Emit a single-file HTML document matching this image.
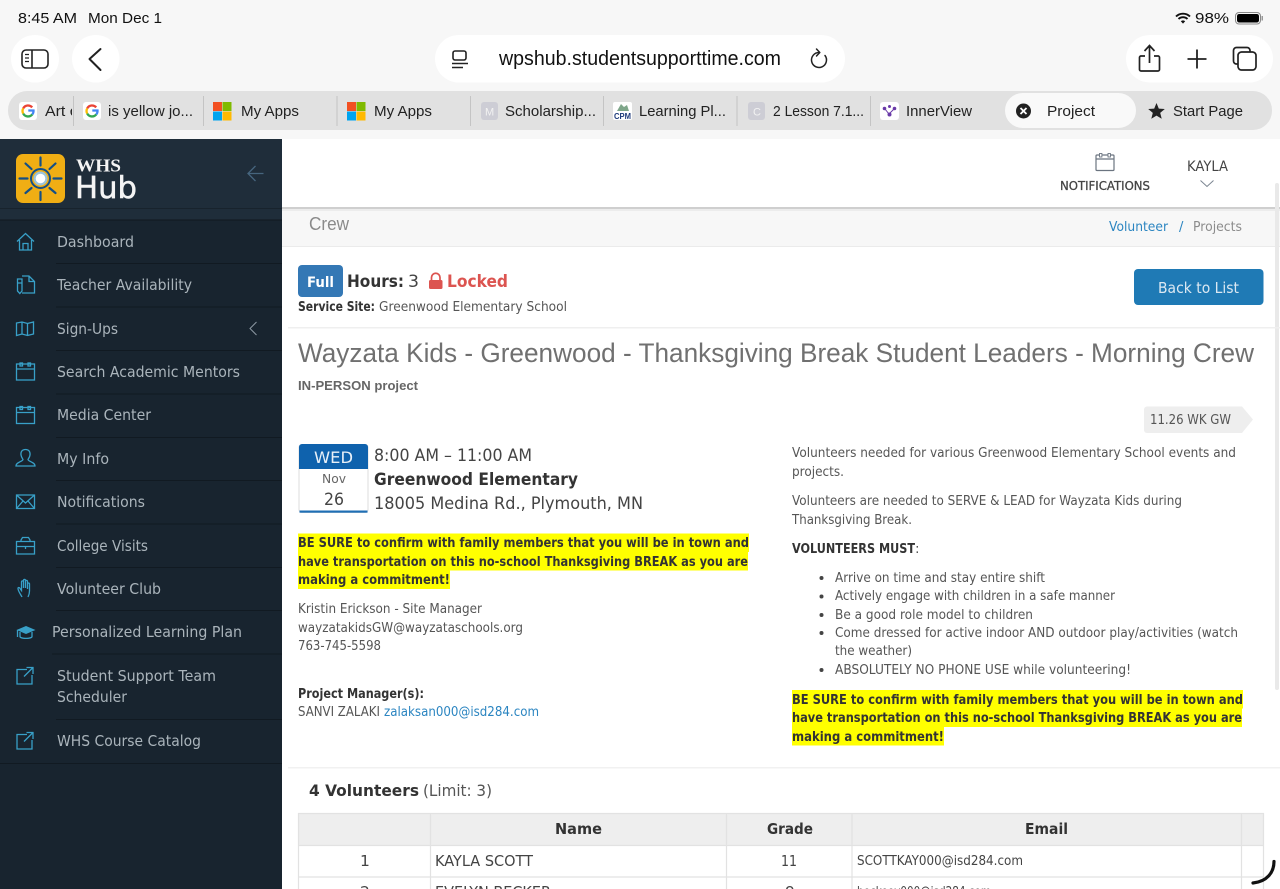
<!DOCTYPE html>
<html><head><meta charset="utf-8"><title>Project</title>
<style>
html,body{margin:0;padding:0;width:1280px;height:889px;overflow:hidden;background:#fff}
svg{display:block;filter:blur(.3px)}
text{white-space:pre}
.l{font-family:"Liberation Sans",sans-serif}
.d{font-family:"DejaVu Sans",sans-serif}
.t{font-family:"Liberation Sans",sans-serif;font-size:14.5px;fill:#222}
.n{font-family:"DejaVu Sans",sans-serif;font-size:15.5px;fill:#aab4bb}
.b{font-family:"DejaVu Sans",sans-serif;font-size:13.5px;fill:#555}
.bb{font-family:"DejaVu Sans",sans-serif;font-size:13.5px;font-weight:bold;fill:#333}
.i{fill:none;stroke:#38a0c8;stroke-width:1.3}
.sep{stroke:#111a22;stroke-width:1}
.g{stroke:#e2e2e2;stroke-width:1.2}
</style></head><body>
<svg width="1280" height="889" viewBox="0 0 1280 889" xmlns="http://www.w3.org/2000/svg">
<defs>
<clipPath id="c1"><rect x="0" y="95" width="72" height="30"/></clipPath>
<g id="goog"><rect x="-9" y="-9" width="18" height="18" rx="3" fill="#fff"/>
<g fill="none" stroke-width="2.3"><path d="M4.200-3.600A5.500 5.500 0 0 0-4.800-2.600" stroke="#ea4335"/><path d="M-4.800-2.600A5.500 5.500 0 0 0-4.800 2.600" stroke="#fbbc05"/><path d="M-4.800 2.600A5.500 5.500 0 0 0 4.300 3.400" stroke="#34a853"/><path d="M4.300 3.400A5.500 5.500 0 0 0 5.500-.5H.3" stroke="#4285f4"/></g></g>
</defs>

<!-- browser chrome -->
<rect width="1280" height="139" fill="#f7f7f7"/>
<text class="l" x="18" y="23" font-size="15" fill="#111" textLength="59" lengthAdjust="spacingAndGlyphs">8:45 AM</text>
<text class="l" x="88" y="23" font-size="15" fill="#111" textLength="74" lengthAdjust="spacingAndGlyphs">Mon Dec 1</text>
<path d="M1176 16.500a10 10 0 0 1 14 0M1178.500 19a6.500 6.500 0 0 1 9 0" fill="none" stroke="#111" stroke-width="1.900"/><path d="M1180.800 21.300a3.200 3.200 0 0 1 4.400 0L1183 23.600z" fill="#111"/>
<text class="l" x="1195" y="23" font-size="15" fill="#111" textLength="34" lengthAdjust="spacingAndGlyphs">98%</text>
<rect x="1235.500" y="12.500" width="25" height="11.500" rx="3.500" fill="none" stroke="#888"/><rect x="1237" y="14" width="22" height="8.500" rx="2.200" fill="#000"/><rect x="1261.500" y="16" width="1.500" height="4.500" fill="#999"/>

<rect x="11" y="35" width="48" height="47.500" rx="24" fill="#fff"/>
<rect x="72" y="35" width="47.500" height="47.500" rx="24" fill="#fff"/>
<rect x="435" y="35" width="410" height="47.500" rx="24" fill="#fff"/>
<rect x="1126" y="35" width="147" height="47.500" rx="24" fill="#fff"/>

<rect x="22" y="50" width="26" height="18" rx="4" fill="none" stroke="#222" stroke-width="1.600"/><path d="M32 50v18" stroke="#222" stroke-width="1.600"/><path d="M25 54.500h4M25 58h4M25 61.500h4" stroke="#222" stroke-width="1.200"/>
<path d="M100.500 50 89.500 60 100.500 71" transform="translate(0 -1)" fill="none" stroke="#222" stroke-width="2" stroke-linecap="round" stroke-linejoin="round"/>
<rect x="453" y="51" width="13" height="9" rx="2" fill="none" stroke="#222" stroke-width="1.600"/><path d="M452 63.500h16M452 67.500h11" stroke="#222" stroke-width="1.600"/>
<text class="l" x="499" y="65" font-size="20" fill="#111" textLength="282" lengthAdjust="spacingAndGlyphs">wpshub.studentsupporttime.com</text>
<path d="M825 55.500a7.500 7.500 0 1 1-6-3" fill="none" stroke="#222" stroke-width="1.500" stroke-linecap="round"/><path d="M816.500 49l3.300 3.500-3.300 3.500" fill="none" stroke="#222" stroke-width="1.500" stroke-linecap="round" stroke-linejoin="round"/>
<path d="M1145 56h-4a1.500 1.500 0 0 0-1.500 1.500v12a1.500 1.500 0 0 0 1.500 1.500h17a1.500 1.500 0 0 0 1.500-1.500v-12a1.500 1.500 0 0 0-1.500-1.500h-4M1149.500 63V46M1144.500 51l5-5.500 5 5.500" fill="none" stroke="#222" stroke-width="1.700"/>
<path d="M1197 49.500v19M1187.500 59h19" stroke="#222" stroke-width="1.800"/>
<rect x="1238" y="52" width="18" height="18" rx="3.500" fill="none" stroke="#222" stroke-width="1.700"/><path d="M1238 64h-1.500a3 3 0 0 1-3-3v-10.500a3 3 0 0 1 3-3H1247a3 3 0 0 1 3 3V52" fill="none" stroke="#222" stroke-width="1.700"/>

<!-- tab bar -->
<rect x="8" y="91" width="1264" height="39" rx="19" fill="#e1e1e1"/>
<rect x="1005" y="93" width="131" height="35" rx="17.500" fill="#f9f9f9"/>
<g stroke="#c4c4c4"><path d="M73.500 96v30M203.500 96v30M337 96v30M470.500 96v30M603.500 96v30M737 96v30M870.500 96v30"/></g>

<use href="#goog" transform="translate(28 111)"/>
<use href="#goog" transform="translate(92 111)"/>
<g clip-path="url(#c1)"><text class="t" x="45" y="116" textLength="38" lengthAdjust="spacingAndGlyphs">Art of</text></g>
<text class="t" x="108" y="116" textLength="85" lengthAdjust="spacingAndGlyphs">is yellow jo...</text>

<rect x="213" y="102" width="9" height="9" fill="#f25022"/><rect x="222.500" y="102" width="9" height="9" fill="#7fba00"/><rect x="213" y="111.500" width="9" height="9" fill="#00a4ef"/><rect x="222.500" y="111.500" width="9" height="9" fill="#ffb900"/>
<text class="t" x="241" y="116" textLength="58" lengthAdjust="spacingAndGlyphs">My Apps</text>
<rect x="347" y="102" width="9" height="9" fill="#f25022"/><rect x="356.500" y="102" width="9" height="9" fill="#7fba00"/><rect x="347" y="111.500" width="9" height="9" fill="#00a4ef"/><rect x="356.500" y="111.500" width="9" height="9" fill="#ffb900"/>
<text class="t" x="374" y="116" textLength="58" lengthAdjust="spacingAndGlyphs">My Apps</text>
<rect x="481" y="102" width="17" height="18" rx="3" fill="#cdcdd5"/><text class="l" x="485" y="115.500" font-size="11" fill="#f2f2f2">M</text>
<text class="t" x="505" y="116" textLength="91" lengthAdjust="spacingAndGlyphs">Scholarship...</text>
<rect x="613" y="102" width="19" height="18" rx="2" fill="#fff"/><path d="M617 111l4-7 3 3 3-2 2 6z" fill="#7fa68a"/><text class="l" x="614" y="119" font-size="8" font-weight="bold" fill="#1d3a7a" textLength="17" lengthAdjust="spacingAndGlyphs">CPM</text>
<text class="t" x="639" y="116" textLength="87" lengthAdjust="spacingAndGlyphs">Learning Pl...</text>
<rect x="748" y="102" width="17" height="18" rx="3" fill="#cdcdd5"/><text class="l" x="753" y="115.500" font-size="11" fill="#f2f2f2">C</text>
<text class="t" x="773" y="116" textLength="91" lengthAdjust="spacingAndGlyphs">2 Lesson 7.1...</text>
<rect x="880" y="102" width="19" height="18" rx="3" fill="#fff"/><g fill="#6a3aa8"><circle cx="884.500" cy="108.500" r="1.800"/><circle cx="894.500" cy="108.500" r="1.800"/><circle cx="889.500" cy="106.500" r="1.500"/><circle cx="889.500" cy="114.500" r="2"/></g><path d="M885 109l4 5 5-5" fill="none" stroke="#6a3aa8"/>
<text class="t" x="906" y="116" textLength="66" lengthAdjust="spacingAndGlyphs">InnerView</text>
<circle cx="1023.500" cy="111" r="7.500" fill="#222"/><path d="M1020.500 108l6 6M1026.500 108l-6 6" stroke="#fff" stroke-width="1.800"/>
<text class="t" x="1047" y="116" textLength="48" lengthAdjust="spacingAndGlyphs">Project</text>
<path d="M1156.500 103l2.300 5.600 6 .4-4.600 3.900 1.500 5.900-5.200-3.200-5.200 3.200 1.500-5.900-4.600-3.900 6-.4z" fill="#222"/>
<text class="t" x="1173" y="116" textLength="70" lengthAdjust="spacingAndGlyphs">Start Page</text>

<!-- main top bar -->
<rect x="282" y="139" width="998" height="69" fill="#fff"/>
<rect x="282" y="208" width="998" height="38" fill="#f7f7f7"/>
<rect x="282" y="207" width="998" height="2" fill="#cfcfcf"/>
<rect x="282" y="209" width="998" height="2" fill="#ececec"/>
<rect x="282" y="246" width="998" height="1" fill="#ebebeb"/>
<rect x="1096" y="155" width="18" height="15.500" rx="1" fill="none" stroke="#6b7480" stroke-width="1.200"/><path d="M1096 159h18" stroke="#6b7480" stroke-width="1.200"/><rect x="1099.500" y="153.500" width="2.400" height="3.500" fill="#fff" stroke="#6b7480" stroke-width=".9"/><rect x="1108" y="153.500" width="2.400" height="3.500" fill="#fff" stroke="#6b7480" stroke-width=".9"/>
<text class="d" x="1060" y="190" font-size="12.500" fill="#444" textLength="90" lengthAdjust="spacingAndGlyphs" stroke="#444" stroke-width=".3">NOTIFICATIONS</text>
<text class="d" x="1187" y="171" font-size="14.500" fill="#444" textLength="41" lengthAdjust="spacingAndGlyphs">KAYLA</text>
<path d="M1200.500 180.500l6.500 6 6.500-6" fill="none" stroke="#7a8490" stroke-width="1"/>
<text class="l" x="309" y="230" font-size="18" fill="#8a8a8a" textLength="40" lengthAdjust="spacingAndGlyphs">Crew</text>
<text class="d" x="1109" y="231" font-size="13.500" fill="#2b85c1" textLength="59" lengthAdjust="spacingAndGlyphs">Volunteer</text>
<text class="d" x="1179" y="231" font-size="13" fill="#2b85c1">/</text>
<text class="d" x="1193" y="231" font-size="13.500" fill="#8c8c8c" textLength="49" lengthAdjust="spacingAndGlyphs">Projects</text>
<rect x="1275" y="183" width="4" height="507" rx="2" fill="#e9e9e9"/>

<!-- sidebar -->
<rect x="0" y="139" width="282" height="750" fill="#18242f"/>
<rect x="0" y="139" width="282" height="81" fill="#1f2d3a"/>
<path d="M0 208.500h282" stroke="#18232d"/><path d="M0 220h282" stroke="#10181f"/>
<rect x="16" y="154" width="49" height="49" rx="7" fill="#f0ae14"/>
<g stroke="#144f86" stroke-width="2.200" stroke-linecap="round"><path d="M40.500 157.500v8M40.500 192v8M19.500 178.500h8M53.500 178.500h8M25.500 163.500l6 5.500M49.500 188l6 5M55.500 163.500l-6 5.500M31.500 188l-6 5"/></g>
<circle cx="40.500" cy="178.500" r="9.500" fill="#f0ae14" stroke="#144f86" stroke-width="2"/><circle cx="40.500" cy="178.500" r="7" fill="#9cc4dc"/><circle cx="40.500" cy="178.500" r="4.800" fill="#fff"/>
<text x="76" y="171.500" font-family="'Liberation Serif',serif" font-weight="bold" font-size="17.500" fill="#f4f4f4" textLength="45" lengthAdjust="spacingAndGlyphs">WHS</text>
<text class="d" x="75" y="198" font-size="30" fill="#f4f4f4" stroke="#f4f4f4" stroke-width=".5" textLength="62" lengthAdjust="spacingAndGlyphs">Hub</text>
<path d="M263.500 173.500h-15M255.500 166l-7.500 7.500 7.500 7.500" fill="none" stroke="#46657e" stroke-width="1.300"/>

<g class="sep"><path d="M56 263.500h226M56 307h226M56 350.500h226M56 394h226M56 437.500h226M56 480.500h226M56 524h226M56 567.500h226M56 610.500h226M52 654h230M56 719.500h226M0 763.500h282"/></g>
<text class="n" x="57" y="247" textLength="77" lengthAdjust="spacingAndGlyphs">Dashboard</text>
<text class="n" x="57" y="290" textLength="135" lengthAdjust="spacingAndGlyphs">Teacher Availability</text>
<text class="n" x="57" y="334" textLength="61" lengthAdjust="spacingAndGlyphs">Sign-Ups</text>
<text class="n" x="57" y="377" textLength="183" lengthAdjust="spacingAndGlyphs">Search Academic Mentors</text>
<text class="n" x="57" y="420" textLength="94" lengthAdjust="spacingAndGlyphs">Media Center</text>
<text class="n" x="57" y="464" textLength="52" lengthAdjust="spacingAndGlyphs">My Info</text>
<text class="n" x="57" y="507" textLength="88" lengthAdjust="spacingAndGlyphs">Notifications</text>
<text class="n" x="57" y="551" textLength="91" lengthAdjust="spacingAndGlyphs">College Visits</text>
<text class="n" x="57" y="594" textLength="104" lengthAdjust="spacingAndGlyphs">Volunteer Club</text>
<text class="n" x="52" y="637" textLength="190" lengthAdjust="spacingAndGlyphs">Personalized Learning Plan</text>
<text class="n" x="57" y="681" textLength="159" lengthAdjust="spacingAndGlyphs">Student Support Team</text>
<text class="n" x="57" y="702" textLength="70" lengthAdjust="spacingAndGlyphs">Scheduler</text>
<text class="n" x="57" y="746" textLength="144" lengthAdjust="spacingAndGlyphs">WHS Course Catalog</text>
<path d="M256.500 322l-6.500 6.500 6.500 6.500" fill="none" stroke="#8d99a3" stroke-width="1"/>

<path class="i" d="M17 241.500l8.500-8 8.500 8M19.500 240v10h12v-10M23 250v-6.500h5v6.500"/>
<path class="i" d="M22 276h7l5.500 5.500V293H22M29 276v5.500h5.500M17.500 279h4.500V291l-2.200 2.500-2.300-2.500zM17.500 283h4.500"/>
<path class="i" d="M16.500 323v12.500l5.500-1.500 5.500 1.500 6-1.500V322l-6 1.500-5.500-1.500zM22 322v12M27.500 323.500V335.500"/>
<g class="i"><rect x="16.500" y="364" width="18" height="16"/><path d="M16.500 369h18"/><rect x="20" y="363" width="2.500" height="3"/><rect x="28" y="363" width="2.500" height="3"/>
<rect x="16.500" y="407.500" width="18" height="16"/><path d="M16.500 412.500h18"/><rect x="20" y="406.500" width="2.500" height="3"/><rect x="28" y="406.500" width="2.500" height="3"/></g>
<path class="i" d="M25.500 449.500c-3.500 0-5 2.500-4.500 5.500.3 2 1.500 3.500 2 4.500 0 2-7 2.500-7 6.500h19c0-4-7-4.500-7-6.500.5-1 1.800-2.500 2-4.500.4-3-1-5.500-4.500-5.500z"/>
<path class="i" d="M16.500 495h18v13.500h-18zM16.500 495l9 8 9-8M16.500 508.500l6.500-7.500M34.500 508.500l-6.500-7.500"/>
<path class="i" d="M16.500 541.500h18v12.500h-18zM16.500 546.500h18M21 541.500v-1.500l1.500-2.500h6l1.500 2.500v1.500M25.500 546v3"/>
<path class="i" d="M22 597c-1-2-4-6-4-8.500 0-1.500 1.500-1.200 2 0l1.500 2V582c0-1.500 1.800-1.500 2 0v6-7.500c0-1.500 2-1.500 2 0V588v-6.500c0-1.500 2-1.500 2 0V589v-5c0-1.300 2-1.300 2 0v7c0 2-.5 4-1.500 6"/>
<path d="M16.500 630l9.500-4 9.500 4-9.500 4z" fill="#38a0c8"/><path class="i" d="M20 632v4.500c0 2.500 12 2.500 12 0V632M17.500 630v7" stroke-width="1.700"/>
<path class="i" d="M27 735h-10v14.500h15v-9M24 742l8.500-8.500M26.500 733h6.500v6.500" transform="translate(0 -65.500)"/>
<path class="i" d="M27 735h-10v14.500h15v-9M24 742l8.500-8.500M26.500 733h6.500v6.500" transform="translate(0 -.5)"/>

<!-- header row -->
<rect x="298" y="265" width="45" height="32" rx="4" fill="#3478b5"/>
<text class="d" x="307" y="287" font-size="14.500" font-weight="bold" fill="#fff" textLength="27" lengthAdjust="spacingAndGlyphs">Full</text>
<text class="d" x="347" y="287" font-size="16.500" font-weight="bold" fill="#333" textLength="57" lengthAdjust="spacingAndGlyphs">Hours:</text>
<text class="d" x="408" y="287" font-size="16.500" fill="#444" textLength="11" lengthAdjust="spacingAndGlyphs">3</text>
<rect x="429" y="280" width="13.500" height="9" rx="1.500" fill="#dc5450"/><path d="M431.500 281v-3.500a4.200 4.200 0 0 1 8.500 0V281" fill="none" stroke="#dc5450" stroke-width="1.700"/>
<text class="d" x="447" y="287" font-size="16.500" font-weight="bold" fill="#dc5450" textLength="61" lengthAdjust="spacingAndGlyphs">Locked</text>
<text class="bb" x="298" y="311" textLength="77" lengthAdjust="spacingAndGlyphs">Service Site:</text>
<text class="b" x="379" y="311" textLength="188" lengthAdjust="spacingAndGlyphs">Greenwood Elementary School</text>
<rect x="1134" y="269" width="129.500" height="36" rx="4" fill="#1f7ab5"/>
<text class="d" x="1158" y="293" font-size="15.500" fill="#dbe8f2" textLength="81" lengthAdjust="spacingAndGlyphs">Back to List</text>
<rect x="288" y="327" width="992" height="1.500" fill="#efefef"/>
<text class="l" x="298" y="362" font-size="26.500" fill="#707070" textLength="956" lengthAdjust="spacingAndGlyphs">Wayzata Kids - Greenwood - Thanksgiving Break Student Leaders - Morning Crew</text>
<text class="l" x="298" y="390" font-size="12.500" font-weight="bold" fill="#666" textLength="120" lengthAdjust="spacingAndGlyphs">IN-PERSON project</text>
<path d="M1147 406.500h95l11 13-11 13.500h-95a3 3 0 0 1-3-3v-20.500a3 3 0 0 1 3-3z" fill="#eeeeee"/>
<text class="d" x="1150" y="424" font-size="13.500" fill="#555" textLength="81" lengthAdjust="spacingAndGlyphs">11.26 WK GW</text>

<!-- date -->
<rect x="299" y="444.500" width="69" height="68" rx="3" fill="#fff" stroke="#dcdcdc"/>
<path d="M299 447a3 3 0 0 1 3-3h63a3 3 0 0 1 3 3v22h-69z" fill="#0f62ad"/>
<rect x="299.500" y="510.500" width="68" height="2.200" fill="#1f6fb5"/>
<text class="d" x="314" y="463" font-size="16" fill="#e8f0f8" textLength="39" lengthAdjust="spacingAndGlyphs">WED</text>
<text class="d" x="322" y="483" font-size="12.500" fill="#666" textLength="24" lengthAdjust="spacingAndGlyphs">Nov</text>
<text class="d" x="324" y="505" font-size="16.500" fill="#444" textLength="20" lengthAdjust="spacingAndGlyphs">26</text>
<text class="d" x="374" y="461" font-size="16.500" fill="#444" textLength="158" lengthAdjust="spacingAndGlyphs">8:00 AM – 11:00 AM</text>
<text class="d" x="374" y="485" font-size="16.500" font-weight="bold" fill="#333" textLength="204" lengthAdjust="spacingAndGlyphs">Greenwood Elementary</text>
<text class="d" x="374" y="509" font-size="16.500" fill="#444" textLength="269" lengthAdjust="spacingAndGlyphs">18005 Medina Rd., Plymouth, MN</text>

<!-- left column -->
<rect x="298" y="533.500" width="451" height="18.500" fill="#ffff00"/>
<rect x="298" y="552" width="450" height="18.500" fill="#ffff00"/>
<rect x="298" y="570.500" width="152" height="18.500" fill="#ffff00"/>
<text class="bb" x="298" y="547" textLength="451" lengthAdjust="spacingAndGlyphs">BE SURE to confirm with family members that you will be in town and</text>
<text class="bb" x="298" y="566" textLength="450" lengthAdjust="spacingAndGlyphs">have transportation on this no-school Thanksgiving BREAK as you are</text>
<text class="bb" x="298" y="584" textLength="152" lengthAdjust="spacingAndGlyphs">making a commitment!</text>
<text class="b" x="298" y="613" textLength="184" lengthAdjust="spacingAndGlyphs">Kristin Erickson - Site Manager</text>
<text class="b" x="298" y="632" textLength="225" lengthAdjust="spacingAndGlyphs">wayzatakidsGW@wayzataschools.org</text>
<text class="b" x="298" y="650" textLength="83" lengthAdjust="spacingAndGlyphs">763-745-5598</text>
<text class="bb" x="298" y="698" textLength="126" lengthAdjust="spacingAndGlyphs">Project Manager(s):</text>
<text class="b" x="298" y="716" textLength="82" lengthAdjust="spacingAndGlyphs">SANVI ZALAKI</text>
<text class="b" x="384" y="716" style="fill:#2b85c1" textLength="155" lengthAdjust="spacingAndGlyphs">zalaksan000@isd284.com</text>

<!-- right column -->
<text class="b" x="792" y="457" textLength="444" lengthAdjust="spacingAndGlyphs">Volunteers needed for various Greenwood Elementary School events and</text>
<text class="b" x="792" y="476" textLength="52" lengthAdjust="spacingAndGlyphs">projects.</text>
<text class="b" x="792" y="505" textLength="390" lengthAdjust="spacingAndGlyphs">Volunteers are needed to SERVE &amp; LEAD for Wayzata Kids during</text>
<text class="b" x="792" y="524" textLength="120" lengthAdjust="spacingAndGlyphs">Thanksgiving Break.</text>
<text class="bb" x="792" y="553" textLength="123" lengthAdjust="spacingAndGlyphs">VOLUNTEERS MUST</text>
<text class="b" x="915" y="553">:</text>
<g fill="#444"><circle cx="821.500" cy="578" r="2"/><circle cx="821.500" cy="596.500" r="2"/><circle cx="821.500" cy="615" r="2"/><circle cx="821.500" cy="633" r="2"/><circle cx="821.500" cy="670" r="2"/></g>
<text class="b" x="835" y="582" textLength="210" lengthAdjust="spacingAndGlyphs">Arrive on time and stay entire shift</text>
<text class="b" x="835" y="600" textLength="280" lengthAdjust="spacingAndGlyphs">Actively engage with children in a safe manner</text>
<text class="b" x="835" y="619" textLength="198" lengthAdjust="spacingAndGlyphs">Be a good role model to children</text>
<text class="b" x="835" y="637" textLength="403" lengthAdjust="spacingAndGlyphs">Come dressed for active indoor AND outdoor play/activities (watch</text>
<text class="b" x="835" y="655" textLength="77" lengthAdjust="spacingAndGlyphs">the weather)</text>
<text class="b" x="835" y="674" textLength="296" lengthAdjust="spacingAndGlyphs">ABSOLUTELY NO PHONE USE while volunteering!</text>
<rect x="792" y="690" width="451" height="18.500" fill="#ffff00"/>
<rect x="792" y="708.500" width="450" height="18.500" fill="#ffff00"/>
<rect x="792" y="727" width="152" height="18.500" fill="#ffff00"/>
<text class="bb" x="792" y="704" textLength="451" lengthAdjust="spacingAndGlyphs">BE SURE to confirm with family members that you will be in town and</text>
<text class="bb" x="792" y="722" textLength="450" lengthAdjust="spacingAndGlyphs">have transportation on this no-school Thanksgiving BREAK as you are</text>
<text class="bb" x="792" y="741" textLength="152" lengthAdjust="spacingAndGlyphs">making a commitment!</text>
<rect x="288" y="767" width="992" height="1.500" fill="#f1f1f1"/>

<!-- table -->
<text class="d" x="309" y="796" font-size="16" font-weight="bold" fill="#333" textLength="110" lengthAdjust="spacingAndGlyphs">4 Volunteers</text>
<text class="d" x="423" y="796" font-size="16" fill="#555" textLength="69" lengthAdjust="spacingAndGlyphs">(Limit: 3)</text>
<rect x="298" y="813" width="966" height="32" fill="#eeeeee"/>
<g class="g"><path d="M298 813.500h966M298 845.500h966M298 877h966M298.500 813v76M430.500 813v76M726.500 813v76M852 813v76M1241.500 813v76M1263.500 813v76"/></g>
<text class="d" x="555" y="834" font-size="15.500" font-weight="bold" fill="#333" textLength="47" lengthAdjust="spacingAndGlyphs">Name</text>
<text class="d" x="767" y="834" font-size="15.500" font-weight="bold" fill="#333" textLength="46" lengthAdjust="spacingAndGlyphs">Grade</text>
<text class="d" x="1025" y="834" font-size="15.500" font-weight="bold" fill="#333" textLength="43" lengthAdjust="spacingAndGlyphs">Email</text>
<text class="d" x="360" y="866" font-size="15.500" fill="#444">1</text>
<text class="d" x="435" y="866" font-size="15.500" fill="#444" textLength="98" lengthAdjust="spacingAndGlyphs">KAYLA SCOTT</text>
<text class="d" x="781" y="866" font-size="15.500" fill="#444" textLength="16" lengthAdjust="spacingAndGlyphs">11</text>
<text class="d" x="857" y="865" font-size="13.500" fill="#444" textLength="166" lengthAdjust="spacingAndGlyphs">SCOTTKAY000@isd284.com</text>
<text class="d" x="360" y="897" font-size="15.500" fill="#444">2</text>
<text class="d" x="435" y="897" font-size="15.500" fill="#444" textLength="116" lengthAdjust="spacingAndGlyphs">EVELYN BECKER</text>
<text class="d" x="785" y="897" font-size="15.500" fill="#444">9</text>
<text class="d" x="857" y="896" font-size="13.500" fill="#444" textLength="134" lengthAdjust="spacingAndGlyphs">beckeev000@isd284.com</text>
<path d="M1274 861.500c0 11-7 20-21 21.500" fill="none" stroke="#111" stroke-width="3.200" stroke-linecap="round"/>
</svg>
</body></html>
